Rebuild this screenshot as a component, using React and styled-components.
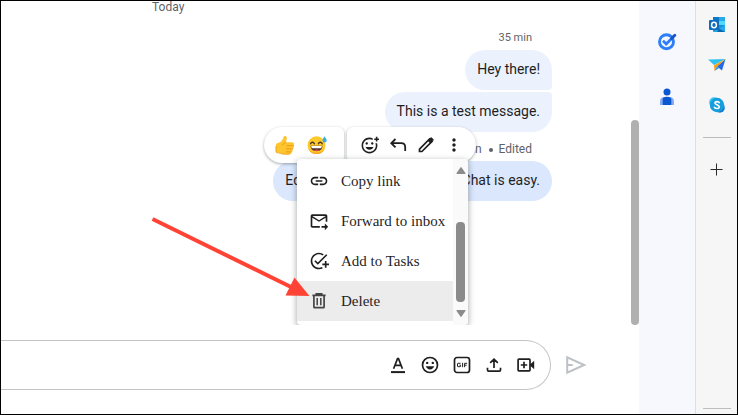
import React from "react";
import styled, { createGlobalStyle, css } from "styled-components";
import {
  MdLink,
  MdMoreVert,
  MdOutlineAddReaction,
  MdOutlineAddTask,
  MdOutlineForwardToInbox,
} from "react-icons/md";

const GlobalStyle = createGlobalStyle`
  * { box-sizing: border-box; }
  body { margin: 0; font-family: Roboto, "Liberation Sans", sans-serif; color: #1f1f1f; background: #fff; }
  button, input { font: inherit; color: inherit; }
  svg { display: block; }
`;

const Frame = styled.div`
  display: flex;
  height: 100vh;
  border: 1px solid #000;
  background: #fff;
`;

const Main = styled.main`
  flex: 1;
  min-width: 0;
  display: flex;
  flex-direction: column;
`;

const Conversation = styled.section`
  flex: 1;
  min-height: 0;
  display: flex;
  overflow: hidden;
`;

const MessageList = styled.div`
  flex: 1;
  min-width: 0;
  display: flex;
  flex-direction: column;
  align-items: flex-end;
  padding-right: 79px;
`;

const DayLabel = styled.div`
  align-self: flex-start;
  padding-left: 151px;
  font-size: 12px;
  line-height: 13px;
  color: #5f6368;
`;

const ScrollTrack = styled.div`
  width: 8px;
  display: flex;
  align-items: flex-end;
`;

const ScrollThumb = styled.div`
  width: 8px;
  height: 205px;
  border-radius: 4px;
  background: #b0b0b0;
`;

const Meta = styled.div`
  padding: ${(p) => (p.$first ? "16px 20px 4px" : "9px 20px 4px")};
  font-size: ${(p) => (p.$first ? "11px" : "12px")};
  line-height: 16px;
  text-align: right;
  color: #5f6368;
`;

const Dot = styled.span`
  display: inline-block;
  width: 4px;
  height: 4px;
  margin: 0 6px 0 7px;
  border-radius: 50%;
  vertical-align: middle;
  background: #5f6368;
`;

const corners = {
  first: "20px 20px 4px 20px",
  last: "20px 4px 20px 20px",
  single: "20px",
};

const Bubble = styled.div`
  padding: 9px 12px 11px;
  margin-bottom: ${(p) => (p.$shape === "first" ? "2px" : "0")};
  border-radius: ${(p) => corners[p.$shape]};
  background: ${(p) => (p.$active ? "#dae7fc" : "#ebf2fe")};
  font-size: 14px;
  line-height: 20px;
  white-space: nowrap;
`;

const ActiveMessage = styled.div`
  position: relative;
`;

const Toolbar = styled.div`
  position: absolute;
  top: -5px;
  right: 76px;
  display: flex;
  gap: 3px;
`;

const ToolGroup = styled.div`
  display: flex;
  align-items: center;
  height: 36px;
  background: #fff;
  box-shadow: 0 1px 3px rgba(60, 64, 67, 0.45);
  ${(p) =>
    p.$side === "left"
      ? css`
          padding: 0 11px 0 5px;
          border-radius: 18px 6px 6px 18px;
        `
      : css`
          padding: 0 8px;
          border-radius: 6px 18px 18px 6px;
        `}
`;

const IconButton = styled.button`
  display: flex;
  align-items: center;
  justify-content: center;
  flex: none;
  width: ${(p) => p.$w || 32}px;
  height: ${(p) => p.$h || 32}px;
  padding: 0;
  border: 0;
  background: none;
  color: ${(p) => p.$color || "#1f1f1f"};
`;

const Menu = styled.div`
  position: absolute;
  top: 27px;
  right: 84px;
  display: flex;
  width: 171px;
  border-radius: 4px;
  background: #fff;
  box-shadow: 0 2px 6px rgba(60, 64, 67, 0.5);
`;

const MenuItems = styled.div`
  flex: 1;
  padding: 2px 0 4px;
`;

const MenuItem = styled.button`
  display: flex;
  align-items: center;
  gap: 12px;
  width: 100%;
  height: 40px;
  padding: 0 0 0 12px;
  border: 0;
  background: ${(p) => (p.$hover ? "#ececec" : "transparent")};
  font-family: "Liberation Serif", serif;
  font-size: 15px;
  line-height: 20px;
  white-space: nowrap;
  text-align: left;
`;

const MenuScroll = styled.div`
  display: flex;
  flex-direction: column;
  align-items: center;
  width: 15px;
  padding: 8px 0;
  border-radius: 0 4px 4px 0;
  background: #fafafa;
`;

const MenuThumb = styled.div`
  width: 9px;
  height: 80px;
  margin: auto 0 8px;
  border-radius: 4px;
  background: #8b8b8b;
`;

const Pointer = styled.svg`
  position: absolute;
  top: 83px;
  right: 241px;
`;

const ComposerRow = styled.form`
  display: flex;
  align-items: center;
  padding: 15px 47px 24px 0;
`;

const Composer = styled.div`
  flex: 1;
  display: flex;
  align-items: center;
  height: 50px;
  padding-right: 8px;
  border: 1px solid #c4c4c4;
  border-left: 0;
  border-radius: 0 25px 25px 0;
`;

const MessageInput = styled.input`
  flex: 1;
  min-width: 0;
  height: 32px;
  padding: 0 12px;
  border: 0;
  outline: 0;
  background: none;
  font-size: 14px;
`;

const SendButton = styled(IconButton)`
  margin-left: 9px;
`;

const SidePanel = styled.aside`
  display: flex;
  flex-direction: column;
  width: 56px;
  padding-top: 12px;
  background: #f6f8fd;
`;

const EdgeBar = styled.aside`
  display: flex;
  flex-direction: column;
  align-items: center;
  width: 42px;
  padding: 4px 0 5px;
  border-left: 1px solid #dcdfe3;
  background: #f6f6f6;
`;

const Divider = styled.hr`
  width: 28px;
  height: 1px;
  margin: ${(p) => (p.$bottom ? "auto 0 0" : "12px 0 11px")};
  border: 0;
  background: #bdbdbd;
`;

const Thumb = () => (
  <svg width="20" height="20" viewBox="0 0 20 20">
    <path d="M1 10.2c0-1.3.6-2 1.8-2.2 2.1-.3 3.4-1.5 4.6-3.2.7-1 1-2 1.3-3.1.3-1.200 2.600-1.100 3 .6.400 1.800-.4 3.300-.8 4.900h6c1.700 0 2.400 1 2.200 2.100-.1.700-.6 1.100-1 1.300.7.500.9 1.200.700 2-.2.800-.7 1.200-1.300 1.400.4.500.5 1.200.2 1.800-.2.600-.7.900-1.200 1.100.3.900-.2 2.200-1.800 2.200h-5.400c-2.200 0-3.100-.8-4.800-1.200-1.500-.3-3.500.2-3.500-1.700z" fill="#ffc52e" />
    <path d="M12 10.700h6.500M11.600 13.900h5.800M11.400 16.900h4.700" stroke="#e99817" strokeWidth="1" strokeLinecap="round" />
    <path d="M1 11v5.400c0 1.700 2 1.300 3.500 1.700 1.700.4 2.600 1.100 4.800 1.100h5.400" stroke="#eda41c" strokeWidth="1" fill="none" />
    <path d="M11 7.200c-.9 1.500-2.500 1.700-3.600 2.300" stroke="#eaa01c" fill="none" strokeLinecap="round" />
  </svg>
);

const SweatSmile = () => (
  <svg width="20" height="20" viewBox="0 0 20 20">
    <circle cx="9.500" cy="10.200" r="8.900" fill="#ffc928" />
    <path d="M1.200 13.400a8.900 8.900 0 0 0 16.600 0c-2.400 3.300-5.100 4.300-8.300 4.300s-6-1-8.300-4.300z" fill="#f5a51d" />
    <path d="M3.600 8.800c.8-2 2.900-2 3.800 0M11.400 8.800c.8-2 2.900-2 3.800 0" fill="none" stroke="#4a342d" strokeWidth="1.400" strokeLinecap="round" />
    <path d="M3.500 10.800h12c-.2 3.600-2.500 5.400-6 5.400s-5.800-1.800-6-5.400z" fill="#4e332c" />
    <path d="M4.300 10.900h10.400v1.200c0 .8-.5 1.100-1.200 1.100h-8c-.8 0-1.200-.3-1.200-1.100z" fill="#fff" />
    <path d="M6.600 15.200c1.800-1 4-1 5.800 0-1.600.9-4.200.9-5.800 0z" fill="#ef4b4f" />
    <path d="M17.500 1.200c1.100 1.700 2.200 3 2.200 4.300 0 1.200-.9 2-2.100 2s-2.100-.8-2.100-2c0-1.300 1-2.600 2-4.300z" fill="#35aee8" />
  </svg>
);

const Reply = () => (
  <svg width="18" height="18" viewBox="0 0 18 18" fill="none" stroke="currentColor" strokeWidth="1.800">
    <path d="M6.500 3 2.300 7.200l4.200 4.200M2.500 7.200h9.700c2.600 0 4 1.500 4 4V15" />
  </svg>
);

const Pencil = () => (
  <svg width="18" height="18" viewBox="0 0 18 18" fill="none" stroke="currentColor">
    <path d="M2.500 15.500v-2.400L12.600 3l2.400 2.400L4.900 15.500z" strokeWidth="1.700" />
    <path d="m11 4.600 2.400-2.400c.5-.5 1-.5 1.500 0l.9.9c.5.500.5 1 0 1.500L13.400 7z" fill="currentColor" strokeWidth="1" />
  </svg>
);

const Trash = () => (
  <svg width="20" height="20" viewBox="0 0 20 20" fill="none" stroke="#444" strokeWidth="1.700">
    <path d="M3.400 4.300h13.200M7.300 4V2.900h5.400V4M4.900 4.500v11.400c0 .5.300.8.800.8h8.600c.5 0 .8-.3.8-.8V4.500" />
    <path d="M8.200 7v7.200M11.800 7v7.200" strokeWidth="1.500" />
  </svg>
);

const FormatText = () => (
  <svg width="20" height="20" viewBox="0 0 20 20" fill="none" stroke="currentColor" strokeWidth="1.700">
    <path d="M5.600 13.800 9.500 3.700h1l3.900 10.100M7 10.300h6" />
    <path d="M3 17.100h14" strokeWidth="2" />
  </svg>
);

const Smile = () => (
  <svg width="20" height="20" viewBox="0 0 20 20">
    <circle cx="10" cy="10" r="7.500" fill="none" stroke="currentColor" strokeWidth="1.700" />
    <circle cx="7.200" cy="7.900" r="1.200" fill="currentColor" />
    <circle cx="12.800" cy="7.900" r="1.200" fill="currentColor" />
    <path d="M5.800 11.200h8.400c-.7 1.900-2.200 3.200-4.200 3.200s-3.500-1.300-4.200-3.200z" fill="currentColor" />
  </svg>
);

const Gif = () => (
  <svg width="20" height="20" viewBox="0 0 20 20" fill="none" stroke="currentColor">
    <rect x="2.500" y="2.500" width="15" height="15" rx="2.500" strokeWidth="1.700" />
    <path d="M8.600 8.300H6.100c-.4 0-.6.2-.6.600v2.200c0 .4.200.6.600.6h1.900c.4 0 .6-.2.600-.6v-.9H7.400M10.600 7.800v4.400M12.600 12.200V8.300h2.500M12.600 10.200h2" strokeWidth="1" />
  </svg>
);

const Upload = () => (
  <svg width="20" height="20" viewBox="0 0 20 20" fill="none" stroke="currentColor" strokeWidth="1.700">
    <path d="M10 13V4.300M6.200 7.900 10 4.100l3.800 3.800M3.500 12.700V15c0 .7.400 1.100 1.100 1.100h10.800c.7 0 1.100-.4 1.100-1.100v-2.300" />
  </svg>
);

const VideoAdd = () => (
  <svg width="20" height="20" viewBox="0 0 20 20" fill="none" stroke="currentColor" strokeWidth="1.700">
    <rect x="2.100" y="4.100" width="11.900" height="11.800" rx=".8" />
    <path d="M8 6.800v6.400M4.800 10h6.400" />
    <path d="m14 9.500 4.200-3.700v8.400L14 10.500z" fill="currentColor" stroke="none" />
  </svg>
);

const Send = () => (
  <svg width="22" height="22" viewBox="0 0 22 22" fill="none" stroke="currentColor" strokeWidth="2">
    <path d="M2.200 3.300v15.400L19.200 11zM2.500 11h5.200" />
  </svg>
);

const TasksLogo = () => (
  <svg width="20" height="20" viewBox="0 0 20 20" fill="none">
    <circle cx="9.500" cy="10.700" r="7" stroke="#2d7ff9" strokeWidth="2.900" />
    <path d="m6 9.700 3.200 3.200 5-5" stroke="#2d7ff9" strokeWidth="2.800" />
    <path d="m14.600 7.500 3.200-3.200" stroke="#1557c8" strokeWidth="3" strokeLinecap="round" />
  </svg>
);

const PersonLogo = () => (
  <svg width="18" height="20" viewBox="0 0 18 20">
    <circle cx="9" cy="4.900" r="3.500" fill="#0b57d0" />
    <path d="M2 18v-3.700C2 11.700 3.700 10 6.500 10h5c2.800 0 4.500 1.700 4.500 4.300V18z" fill="#86a9f8" />
    <path d="M4.700 18v-5.500C4.700 10.800 6 9.800 9 9.800s4.300 1 4.300 2.700V18z" fill="#0b57d0" />
  </svg>
);

const OutlookLogo = () => (
  <svg width="18" height="18" viewBox="0 0 18 18">
    <rect x="5" y="1" width="12" height="15" rx="1" fill="#1490df" />
    <path d="M5 1h6v4H5z" fill="#0a78c5" />
    <path d="M11 1h6v4h-6z" fill="#28a8ea" />
    <path d="M11 5h6v4h-6z" fill="#50d9ff" />
    <path d="M5 16 17 9v7z" fill="#28a8ea" />
    <path d="m11 12.500 6 3.500H9z" fill="#0a67b0" />
    <rect x="1" y="4" width="10" height="10" rx="1" fill="#0f6cbd" />
    <ellipse cx="6" cy="9" rx="2.400" ry="2.700" fill="none" stroke="#fff" strokeWidth="1.500" />
  </svg>
);

const PlaneLogo = () => (
  <svg width="18" height="18" viewBox="0 0 18 18">
    <path d="M0 3.500 17.500 3 6 9z" fill="#2fc3f2" />
    <path d="M17.500 3 14 14.500 9 10.500z" fill="#2468e8" />
    <path d="M6 9.200 17.500 3 9 10.500 6.500 15z" fill="#f6a10b" />
    <path d="m6.500 15 2.500-4.500 2 1.600z" fill="#2c8df2" />
  </svg>
);

const SkypeLogo = () => (
  <svg width="18" height="18" viewBox="0 0 18 18">
    <circle cx="6.200" cy="6.200" r="5" fill="#37c4f2" />
    <circle cx="11.800" cy="11.800" r="5" fill="#1678cf" />
    <circle cx="9" cy="9" r="7.200" fill="#159ddd" />
    <path d="M11.300 6.600C10.800 5.500 7.200 5 6.900 6.900 6.700 9 11.300 8.400 11.300 10.800c0 2.300-4 2.200-4.800.5" fill="none" stroke="#fff" strokeWidth="1.600" strokeLinecap="round" />
  </svg>
);

const Plus = () => (
  <svg width="13" height="13" viewBox="0 0 13 13">
    <path d="M6.500.5v12M.5 6.500h12" stroke="#2b2b2b" strokeWidth="1" />
  </svg>
);

const ArrowHead = ({ down }) => (
  <svg width="10" height="7" viewBox="0 0 10 7">
    <path d={down ? "M1 0h8c.5 0 .7.500.4.900L5.600 6.500c-.3.500-.9.500-1.200 0L.6.900C.3.500.5 0 1 0z" : "M1 7h8c.5 0 .7-.5.4-.9L5.600.5C5.300 0 4.700 0 4.400.5L.6 6.100C.3 6.500.5 7 1 7z"} fill="#8b8b8b" />
  </svg>
);

const menuEntries = [
  { label: "Copy link", icon: <MdLink size={20} /> },
  { label: "Forward to inbox", icon: <MdOutlineForwardToInbox size={20} /> },
  { label: "Add to Tasks", icon: <MdOutlineAddTask size={20} /> },
  { label: "Delete", icon: <Trash />, hover: true },
];

const composerTools = [
  { label: "Formatting", icon: <FormatText /> },
  { label: "Add emoji", icon: <Smile /> },
  { label: "Add GIF", icon: <Gif /> },
  { label: "Upload file", icon: <Upload /> },
  { label: "Add video meeting", icon: <VideoAdd /> },
];

export default function App() {
  return (
    <Frame>
      <GlobalStyle />
      <Main>
        <Conversation>
          <MessageList>
            <DayLabel>Today</DayLabel>
            <Meta $first>35 min</Meta>
            <Bubble $shape="first">Hey there!</Bubble>
            <Bubble $shape="last">This is a test message.</Bubble>
            <ActiveMessage>
              <Meta>
                35 min
                <Dot />
                Edited
              </Meta>
              <Bubble $shape="single" $active>
                Editing messages in Google Chat is easy.
              </Bubble>
              <Toolbar>
                <ToolGroup $side="left">
                  <IconButton aria-label="Thumbs up"><Thumb /></IconButton>
                  <IconButton aria-label="Sweat smile"><SweatSmile /></IconButton>
                </ToolGroup>
                <ToolGroup $side="right">
                  <IconButton $w={29} aria-label="Add reaction"><MdOutlineAddReaction size={19} /></IconButton>
                  <IconButton $w={28} aria-label="Reply"><Reply /></IconButton>
                  <IconButton $w={28} aria-label="Edit"><Pencil /></IconButton>
                  <IconButton $w={28} aria-label="More actions"><MdMoreVert size={20} /></IconButton>
                </ToolGroup>
              </Toolbar>
              <Menu>
                <MenuItems>
                  {menuEntries.map((m) => (
                    <MenuItem key={m.label} $hover={m.hover}>
                      {m.icon}
                      {m.label}
                    </MenuItem>
                  ))}
                </MenuItems>
                <MenuScroll>
                  <ArrowHead />
                  <MenuThumb />
                  <ArrowHead down />
                </MenuScroll>
              </Menu>
              <Pointer width="160" height="86" viewBox="0 0 160 86" aria-hidden="true">
                <path d="M1.500 4 140 72" stroke="#ff4436" strokeWidth="4" />
                <path d="m143.500 62.500 15 18.500-24-.5z" fill="#ff4436" />
              </Pointer>
            </ActiveMessage>
          </MessageList>
          <ScrollTrack>
            <ScrollThumb />
          </ScrollTrack>
        </Conversation>
        <ComposerRow onSubmit={(e) => e.preventDefault()}>
          <Composer>
            <MessageInput type="text" aria-label="Message" />
            {composerTools.map((t) => (
              <IconButton type="button" key={t.label} aria-label={t.label}>
                {t.icon}
              </IconButton>
            ))}
          </Composer>
          <SendButton $color="#bdc1c6" aria-label="Send message"><Send /></SendButton>
        </ComposerRow>
      </Main>
      <SidePanel>
        <IconButton $w={56} $h={56} aria-label="Tasks"><TasksLogo /></IconButton>
        <IconButton $w={56} $h={56} aria-label="Contacts"><PersonLogo /></IconButton>
      </SidePanel>
      <EdgeBar>
        <IconButton $h={40} aria-label="Outlook"><OutlookLogo /></IconButton>
        <IconButton $h={40} aria-label="Drop"><PlaneLogo /></IconButton>
        <IconButton $h={40} aria-label="Skype"><SkypeLogo /></IconButton>
        <Divider />
        <IconButton $h={40} aria-label="Add"><Plus /></IconButton>
        <Divider $bottom />
      </EdgeBar>
    </Frame>
  );
}
